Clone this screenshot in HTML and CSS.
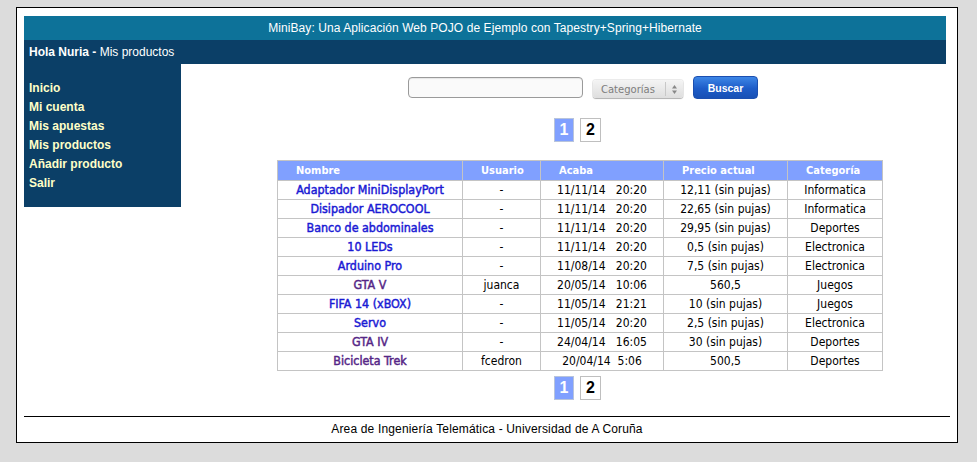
FILE: index.html
```html
<!DOCTYPE html>
<html lang="es">
<head>
<meta charset="utf-8">
<title>MiniBay</title>
<link rel="stylesheet" href="styles.css">
</head>
<body>
<div class="page">
  <div class="title-bar">MiniBay: Una Aplicación Web POJO de Ejemplo con Tapestry+Spring+Hibernate</div>
  <div class="user-bar"><b>Hola Nuria -</b> Mis productos</div>
  <div class="main">
    <nav class="sidebar">
      <a href="#">Inicio</a>
      <a href="#">Mi cuenta</a>
      <a href="#">Mis apuestas</a>
      <a href="#">Mis productos</a>
      <a href="#">Añadir producto</a>
      <a href="#">Salir</a>
    </nav>
    <div class="content">
      <form class="search">
        <input class="search-input" type="text">
        <div class="select"><span class="select-label">Categorías</span><span class="select-arrows"><svg width="7" height="11" viewBox="0 0 7 11"><path d="M3.5 1 L6 4.5 H1 Z" fill="#888"/><path d="M3.5 10 L6 6.5 H1 Z" fill="#888"/></svg></span></div>
        <button class="btn" type="button">Buscar</button>
      </form>
      <div class="pager pager-top">
        <span class="page-num current">1</span>
        <span class="page-num">2</span>
      </div>
      <table class="grid">
        <colgroup>
          <col class="c-name"><col class="c-user"><col class="c-end"><col class="c-price"><col class="c-cat">
        </colgroup>
        <thead>
          <tr><th>Nombre</th><th>Usuario</th><th>Acaba</th><th>Precio actual</th><th>Categoría</th></tr>
        </thead>
        <tbody>
          <tr><td><a href="#">Adaptador MiniDisplayPort</a></td><td>-</td><td class="date">11/11/14   20:20</td><td>12,11 (sin pujas)</td><td>Informatica</td></tr>
          <tr><td><a href="#">Disipador AEROCOOL</a></td><td>-</td><td class="date">11/11/14   20:20</td><td>22,65 (sin pujas)</td><td>Informatica</td></tr>
          <tr><td><a href="#">Banco de abdominales</a></td><td>-</td><td class="date">11/11/14   20:20</td><td>29,95 (sin pujas)</td><td>Deportes</td></tr>
          <tr><td><a href="#">10 LEDs</a></td><td>-</td><td class="date">11/11/14   20:20</td><td>0,5 (sin pujas)</td><td>Electronica</td></tr>
          <tr><td><a href="#">Arduino Pro</a></td><td>-</td><td class="date">11/08/14   20:20</td><td>7,5 (sin pujas)</td><td>Electronica</td></tr>
          <tr><td><a class="visited" href="#">GTA V</a></td><td>juanca</td><td class="date">20/05/14   10:06</td><td>560,5</td><td>Juegos</td></tr>
          <tr><td><a href="#">FIFA 14 (xBOX)</a></td><td>-</td><td class="date">11/05/14   21:21</td><td>10 (sin pujas)</td><td>Juegos</td></tr>
          <tr><td><a href="#">Servo</a></td><td>-</td><td class="date">11/05/14   20:20</td><td>2,5 (sin pujas)</td><td>Electronica</td></tr>
          <tr><td><a class="visited" href="#">GTA IV</a></td><td>-</td><td class="date">24/04/14   16:05</td><td>30 (sin pujas)</td><td>Deportes</td></tr>
          <tr><td><a class="visited" href="#">Bicicleta Trek</a></td><td>fcedron</td><td class="date">20/04/14  5:06</td><td>500,5</td><td>Deportes</td></tr>
        </tbody>
      </table>
      <div class="pager pager-bottom">
        <span class="page-num current">1</span>
        <span class="page-num">2</span>
      </div>
    </div>
  </div>
  <footer class="footer">Area de Ingeniería Telemática - Universidad de A Coruña</footer>
</div>
</body>
</html>
```

FILE: styles.css
```css
html, body {
  margin: 0;
  padding: 0;
}
body {
  background: #dcdcdc;
  font-family: "Liberation Sans", Arial, sans-serif;
  font-size: 12px;
  color: #000;
}
.page {
  box-sizing: border-box;
  margin: 7px 0 0 16px;
  width: 942px;
  height: 436px;
  border: 1px solid #000;
  background: #fff;
  padding: 8px 0 0 7px;
}
.title-bar {
  width: 922px;
  height: 24px;
  line-height: 24px;
  background: #0d7299;
  color: #fff;
  text-align: center;
  letter-spacing: 0.08px;
}
.user-bar {
  width: 917px;
  height: 24px;
  line-height: 24px;
  background: #0b3f67;
  color: #fff;
  padding-left: 5px;
}
.main {
  display: flex;
  align-items: flex-start;
  width: 922px;
  height: 352px;
}
.sidebar {
  box-sizing: border-box;
  width: 157px;
  height: 143px;
  flex: none;
  background: #0b3f67;
  padding: 15px 5px 0;
}
.sidebar a {
  display: block;
  line-height: 19px;
  font-weight: bold;
  color: #ffffc8;
  text-decoration: none;
}
.content {
  flex: 1;
  padding-left: 33px;
  display: flex;
  flex-direction: column;
  align-items: center;
}
.search {
  display: flex;
  align-items: flex-start;
  gap: 10px;
  margin: 12px 0 0 6px;
  height: 23px;
}
.search-input {
  box-sizing: border-box;
  width: 175px;
  height: 21px;
  margin: 1px 0 0;
  border: 1px solid #9a9a9a;
  border-radius: 4px;
  background: #fafafa;
  box-shadow: inset 0 1px 1px rgba(0,0,0,0.08);
  padding: 0;
}
.select {
  box-sizing: border-box;
  display: flex;
  align-items: center;
  width: 90px;
  height: 18px;
  margin-top: 4px;
  border-radius: 3px;
  background: linear-gradient(#f4f4f4, #dedede);
  box-shadow: 0 1px 1px rgba(0,0,0,0.25), 0 0 0 1px rgba(0,0,0,0.08);
}
.select-label {
  flex: 1;
  padding-left: 8px;
  font-family: "DejaVu Sans", sans-serif;
  font-size: 10px;
  color: #7d7d7d;
}
.select-arrows {
  display: flex;
  align-items: center;
  justify-content: center;
  width: 17px;
  height: 14px;
  border-left: 1px solid #c8c8c8;
}
.select-arrows svg {
  display: block;
}
.btn {
  box-sizing: border-box;
  width: 65px;
  height: 23px;
  border: 1px solid #1b4fb0;
  border-radius: 4px;
  background: linear-gradient(#3d86e6, #1d5cc8 55%, #1850b5);
  color: #fff;
  font-family: "Liberation Sans", Arial, sans-serif;
  font-weight: bold;
  font-size: 10.5px;
  padding: 0;
}
.pager {
  display: flex;
  gap: 6px;
  margin-left: -5px;
}
.pager-top {
  margin-top: 19px;
}
.pager-bottom {
  margin-top: 5px;
}
.page-num {
  box-sizing: border-box;
  width: 21px;
  height: 24px;
  border: 1px solid #bfbfbf;
  background: #fff;
  font-weight: bold;
  font-size: 16px;
  line-height: 22px;
  text-align: center;
  color: #000;
}
.page-num.current {
  width: 20px;
  background: #80a0ff;
  color: #fff;
  border-color: #b8c4dc;
}
.grid {
  margin-top: 18px;
  width: 605px;
  border-collapse: collapse;
  table-layout: fixed;
  font-family: "DejaVu Sans Condensed", "DejaVu Sans", sans-serif;
  font-stretch: condensed;
  font-size: 12px;
}
.c-name { width: 185px; }
.c-user { width: 78px; }
.c-end { width: 123px; }
.c-price { width: 124px; }
.c-cat { width: 95px; }
.grid th, .grid td {
  border: 1px solid #c4c4c4;
  padding: 0;
  white-space: nowrap;
}
.grid th {
  height: 19px;
  background: #80a0ff;
  color: #fff;
  font-weight: bold;
  font-size: 11px;
  text-align: left;
  padding-left: 18px;
}
.grid td {
  height: 18px;
  text-align: center;
  line-height: 18px;
}
.grid td.date {
  white-space: pre;
}
.grid a {
  color: #1a1ad4;
  font-size: 12.4px;
  text-decoration: none;
  -webkit-text-stroke: 0.45px currentColor;
}
.grid a.visited {
  color: #552686;
}
.footer {
  width: 926px;
  border-top: 1px solid #000;
  padding-top: 5px;
  line-height: 14px;
  text-align: center;
  letter-spacing: 0.16px;
}
```
